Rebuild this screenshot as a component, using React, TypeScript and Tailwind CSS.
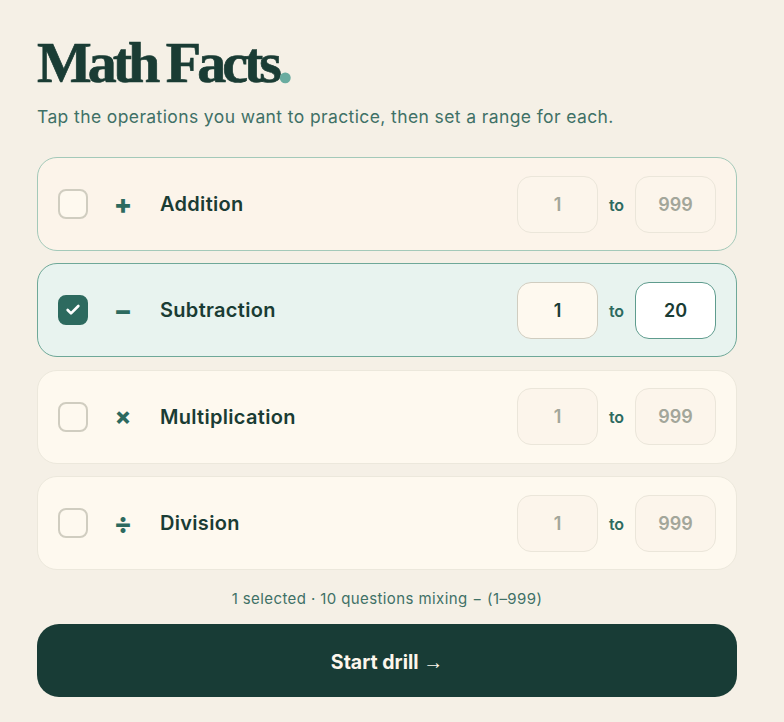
import { Check } from "lucide-react";

type Op = {
  name: string;
  symbol: string;
  from: string;
  to: string;
  state: "hover" | "active" | "idle";
};

const ops: Op[] = [
  { name: "Addition", symbol: "+", from: "1", to: "999", state: "hover" },
  { name: "Subtraction", symbol: "−", from: "1", to: "20", state: "active" },
  { name: "Multiplication", symbol: "×", from: "1", to: "999", state: "idle" },
  { name: "Division", symbol: "÷", from: "1", to: "999", state: "idle" },
];

function OpRow({ op }: { op: Op }) {
  const active = op.state === "active";
  const rowStyle = active
    ? "bg-[#e8f3ef] border-[#6ea898]"
    : op.state === "hover"
      ? "bg-[#fcf4ea] border-[#a3c9b9]"
      : "bg-[#fef9ef] border-[#ece8dc]";

  return (
    <div className={`flex h-[94px] items-center rounded-[20px] border pl-5 pr-5 ${rowStyle}`}>
      <div
        className={`flex h-[30px] w-[30px] items-center justify-center rounded-[8px] border-2 ${
          active ? "border-[#2d6a5f] bg-[#2d6a5f]" : "border-[#d0cdc0] bg-[#fef9ef]"
        }`}
      >
        {active && <Check className="h-4 w-4 text-white" strokeWidth={4} />}
      </div>
      <span
        className={`ml-[19px] w-8 text-center leading-none font-extrabold text-[#2d6a5f] ${
          op.symbol === "×" ? "text-[24px]" : "text-[27px]"
        }`}
      >
        {op.symbol}
      </span>
      <span className="ml-[21px] text-[20px] font-semibold tracking-[0.3px] text-[#1a3c34]">{op.name}</span>
      <div className="ml-auto flex items-center gap-[10px]">
        <div
          className={`flex h-[57px] w-[81px] items-center justify-center rounded-[14px] border text-[18px] font-semibold ${
            active
              ? "border-[#d0cdc0] bg-[#fef9ef] text-[#1a3c34]"
              : "border-[#ebe6da] bg-[#fcf5eb] text-[#a3a69a]"
          }`}
        >
          {op.from}
        </div>
        <span className="mt-[1px] w-[17px] text-center text-[16px] font-semibold text-[#2d6a5f]">to</span>
        <div
          className={`flex h-[57px] w-[81px] items-center justify-center rounded-[14px] border text-[18px] font-semibold ${
            active
              ? "border-[#5f9c8e] bg-white text-[#1a3c34]"
              : "border-[#ebe6da] bg-[#fcf5eb] text-[#a3a69a]"
          }`}
        >
          {op.to}
        </div>
      </div>
    </div>
  );
}

export default function App() {
  return (
    <div className="min-h-[722px] bg-[#f5f0e6] pt-[34px] pl-[37px] font-['Inter',sans-serif]">
      <div className="w-[700px]">
        <h1 className="font-['Liberation_Serif',serif] text-[58px] leading-[58px] font-bold tracking-[-4px] text-[#1a3c34] [word-spacing:-1px] [-webkit-text-stroke:0.7px_#1a3c34]">
          Math Facts<span className="text-[#6aaca0] [-webkit-text-stroke:1.5px_#6aaca0]">.</span>
        </h1>
        <p className="mt-[12px] text-[17.5px] leading-[26px] tracking-[0.39px] text-[#3f7166]">
          Tap the operations you want to practice, then set a range for each.
        </p>
        <div className="mt-[27px] flex flex-col gap-[12.4px]">
          {ops.map((op) => (
            <OpRow key={op.name} op={op} />
          ))}
        </div>
        <p className="mt-[18px] text-center text-[15px] leading-[22px] tracking-[0.4px] text-[#3f7166]">
          1 selected · 10 questions mixing − (1–999)
        </p>
        <button className="mt-[14px] h-[73px] w-full rounded-[22px] bg-[#183c36] pt-[2px] text-[19.5px] font-bold text-[#fdf6ec]">
          Start drill <span className="font-['Liberation_Sans',sans-serif] text-[20px] font-normal">→</span>
        </button>
      </div>
    </div>
  );
}
